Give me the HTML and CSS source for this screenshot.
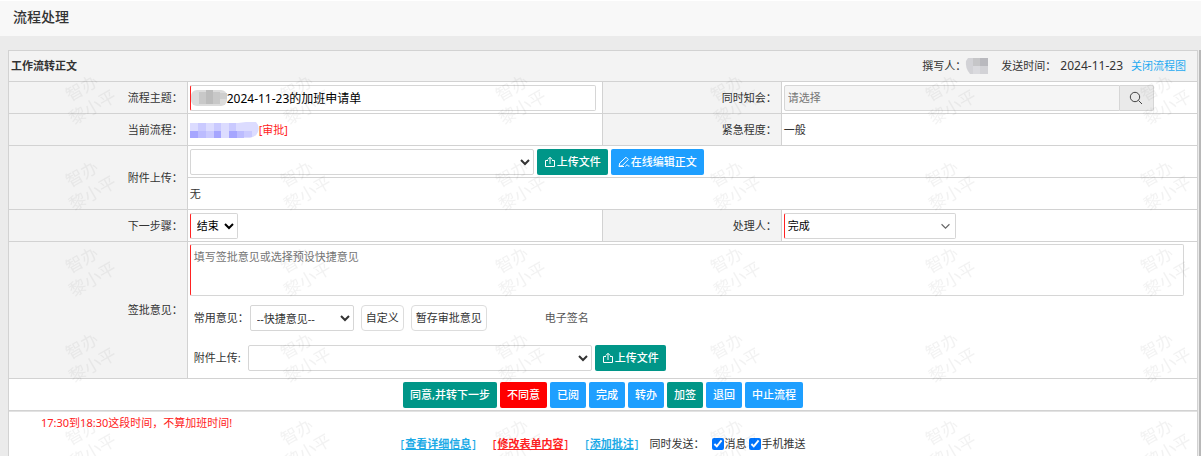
FILE: index.html
```html
<!DOCTYPE html>
<html lang="zh-CN">
<head>
<meta charset="utf-8">
<title>流程处理</title>
<link rel="stylesheet" href="styles.css">
</head>
<body>
<svg class="sprite" aria-hidden="true">
  <symbol id="upload" viewBox="0 0 12 12"><path d="M4 4.500H1.500v6h9v-6H8M6 8V1.500M3.800 3.500 6 1.300l2.200 2.200" fill="none" stroke="currentColor"/></symbol>
  <symbol id="pen" viewBox="0 0 12 12"><path d="M1 10.500 1.800 7 8 1.200l2.300 2.300L4.200 9.600 1 10.500h5M7.500 10.500c1-2 2-2 2.500-1s1 1 1.500.5" fill="none" stroke="currentColor"/></symbol>
</svg>
<header class="page-head"><h1>流程处理</h1></header>
<main class="page-body">
  <form class="panel">
    <div class="panel-head">
      <h2>工作流转正文</h2>
      <div class="meta">
        <span>撰写人：</span>
        <svg class="mosaic-author" viewBox="0 0 24 16" aria-hidden="true">
          <path d="M3 0h20v16H5Q0 10 1 3z" fill="#d2d2d6"/><path d="M8 0h7v8H8z" fill="#c6c6c8"/><path d="M15 0h8v8h-8z" fill="#b9b9be"/><path d="M8 8h7v8H8z" fill="#dadade"/>
        </svg>
        <span class="sent">发送时间：</span>
        <time class="num">2024-11-23</time>
        <a class="link-blue" href="#">关闭流程图</a>
      </div>
    </div>
    <table class="grid">
      <colgroup><col class="c-label"><col class="c-value"><col class="c-label"><col class="c-value"></colgroup>
      <tr>
        <th scope="row"><label for="subject">流程主题：</label></th>
        <td>
          <div class="subject">
            <input id="subject" class="box required" type="text" value="2024-11-23的加班申请单">
            <svg class="mosaic-subject" viewBox="0 0 36 16" aria-hidden="true">
              <rect width="36" height="16" rx="6" fill="#dcdcdc"/><path d="M8 2h7v12H8zM22 2h7v12h-7z" fill="#c8c8c8"/><path d="M15 0h7v14h-7z" fill="#bcbcbc"/><path d="M29 3h7v6h-7z" fill="#cecece"/>
            </svg>
          </div>
        </td>
        <th scope="row"><label for="notify">同时知会：</label></th>
        <td>
          <div class="picker">
            <input id="notify" class="box" type="text" placeholder="请选择">
            <button type="button" aria-label="搜索"><svg viewBox="0 0 14 14" aria-hidden="true"><circle cx="6" cy="6" r="4.700" fill="none" stroke="currentColor"/><path d="m9.500 9.500 3.500 3.500" stroke="currentColor"/></svg></button>
          </div>
        </td>
      </tr>
      <tr>
        <th scope="row">当前流程：</th>
        <td>
          <div class="line">
            <svg class="mosaic-flow" viewBox="0 0 69 16" aria-hidden="true">
              <path d="M0 1h48l8-1h10q4 4 2 10-2 5-8 6H0z" fill="#dcdcff"/><path d="M8 1h8v8H8zM24 1h7v8h-7zM39 1h7v8h-7zM16 9h8v7h-8zM54 9h8v6h-8z" fill="#cacaff"/><path d="M0 9h8v7H0zM24 9h7v7h-7zM39 9h8v7h-8z" fill="#a6a6ff"/><path d="M8 9h8v7H8zM47 9h7v7h-7z" fill="#bcbcff"/>
            </svg><span class="red">[审批]</span>
          </div>
        </td>
        <th scope="row">紧急程度：</th>
        <td>一般</td>
      </tr>
      <tr>
        <th scope="row" rowspan="2"><label for="file1">附件上传：</label></th>
        <td colspan="3">
          <div class="line gap">
            <select id="file1" class="box wide"><option></option></select>
            <button type="button" class="btn green"><svg><use href="#upload"/></svg>上传文件</button>
            <button type="button" class="btn blue"><svg><use href="#pen"/></svg>在线编辑正文</button>
          </div>
        </td>
      </tr>
      <tr><td colspan="3">无</td></tr>
      <tr>
        <th scope="row"><label for="next">下一步骤：</label></th>
        <td><div class="line"><select id="next" class="box required padded"><option>结束</option></select></div></td>
        <th scope="row"><label for="handler">处理人：</label></th>
        <td>
          <div class="handler">
            <select id="handler" class="box required"><option>完成</option></select>
            <svg viewBox="0 0 8 6" aria-hidden="true"><path d="m.5 1 3.500 3.500L7.500 1" fill="none" stroke="#666"/></svg>
          </div>
        </td>
      </tr>
      <tr>
        <th scope="row"><label for="opinion">签批意见：</label></th>
        <td colspan="3">
          <textarea id="opinion" class="box required" placeholder="填写签批意见或选择预设快捷意见"></textarea>
          <div class="line sub">
            <label for="quick">常用意见：</label>
            <select id="quick" class="box quick padded"><option>--快捷意见--</option></select>
            <button type="button" class="btn plain">自定义</button>
            <button type="button" class="btn plain">暂存审批意见</button>
            <span class="sign">电子签名</span>
          </div>
          <div class="line sub last">
            <label for="file2">附件上传:</label>
            <span class="line gap">
              <select id="file2" class="box wide"><option></option></select>
              <button type="button" class="btn green"><svg><use href="#upload"/></svg>上传文件</button>
            </span>
          </div>
        </td>
      </tr>
      <tr>
        <td colspan="4">
          <div class="line actions">
            <button type="button" class="btn green">同意,并转下一步</button>
            <button type="button" class="btn danger">不同意</button>
            <button type="button" class="btn blue">已阅</button>
            <button type="button" class="btn blue">完成</button>
            <button type="button" class="btn blue">转办</button>
            <button type="button" class="btn green">加签</button>
            <button type="button" class="btn blue">退回</button>
            <button type="button" class="btn blue">中止流程</button>
          </div>
        </td>
      </tr>
    </table>
    <div class="panel-foot">
      <p class="note red">17:30到18:30这段时间，不算加班时间!</p>
      <div class="line links">
        <span class="cyan">[<a href="#">查看详细信息</a>]</span>
        <span class="red">[<a href="#">修改表单内容</a>]</span>
        <span class="cyan">[<a href="#">添加批注</a>]</span>
        <div class="line checks">
          <span>同时发送：</span>
          <label><input type="checkbox" checked>消息</label>
          <label><input type="checkbox" checked>手机推送</label>
        </div>
      </div>
    </div>
  </form>
</main>
<svg class="watermark" aria-hidden="true">
  <defs>
    <pattern id="mark" width="215" height="86" patternUnits="userSpaceOnUse">
      <g transform="rotate(-30 82 20)"><text x="69" y="19">智办</text><text x="60" y="41">黎小平</text></g>
    </pattern>
  </defs>
  <rect width="100%" height="100%" fill="url(#mark)"/>
</svg>
</body>
</html>
```
FILE: styles.css
```css
* { box-sizing: border-box; }
body {
  margin: 0;
  min-height: 100vh;
  display: flex;
  flex-direction: column;
  position: relative;
  overflow: hidden;
  background: #ebebeb;
  color: #333;
  font: 11px/16px "Noto Sans", "Noto Sans CJK SC", sans-serif;
}
button, input, select, textarea { font: inherit; color: inherit; margin: 0; }
.sprite { position: absolute; width: 0; height: 0; }
.page-head { padding: 6px 13px 10px; background: #f8f8f8; border-top: 1px solid #fff; }
.page-head h1 { margin: 0; font-size: 14px; line-height: 19px; font-weight: 500; }
.page-body { flex: 1; display: flex; margin-top: 14px; padding: 0 1px 0 8px; border-right: 2px solid #b8b8b8; }
.panel { flex: 1; display: flex; flex-direction: column; min-width: 0; background: #fff; border: 1px solid #d2d2d2; border-bottom: 0; }
.panel-head { display: flex; justify-content: space-between; align-items: center; height: 30px; padding: 0 11px 0 2px; background: #f3f3f3; }
.panel-head h2 { margin: 0; font-size: 11px; font-weight: 700; }
.meta { display: flex; align-items: center; }
.mosaic-author { width: 24px; height: 16px; margin-left: -1px; }
.sent { margin-left: 12px; }
.num { margin: 0 8px 0 4px; font-size: 12px; }
.link-blue { color: #1eaaf1; text-decoration: none; }

.grid { width: 100%; table-layout: fixed; border-collapse: collapse; }
.c-label { width: 15%; }
.c-value { width: 35%; }
.grid th, .grid td { height: 32px; padding: 2px; border: 1px solid #d2d2d2; }
.grid th { padding-right: 4px; background: #f3f3f3; font-weight: 400; text-align: right; }
.grid tr > :first-child:not([colspan="3"]) { border-left: 0; }
.grid tr > :last-child { border-right: 0; }
.line { display: flex; align-items: center; }
.gap { gap: 3px; }
.box { height: 26px; border: 1px solid #d6d6d6; border-radius: 2px; background: #fff; outline: 0; }
.required { border-left: 1px solid #f22; color: #000; }
.padded { padding: 0 2px; }
.subject { position: relative; margin-right: 4px; }
.subject .box { display: block; width: 100%; padding: 0 0 0 36px; font-size: 12px; }
.mosaic-subject { position: absolute; left: 1px; top: 5px; width: 36px; height: 16px; }
.picker { display: flex; width: 370px; max-width: 100%; }
.picker .box { flex: 1; min-width: 0; padding: 0 3px; background: #f5f5f5; border-radius: 2px 0 0 2px; }
.picker button { display: grid; place-items: center; width: 34px; padding: 0; border: 1px solid #d6d6d6; border-left: 0; border-radius: 0 2px 2px 0; background: #eaeaea; color: #444; }
.picker svg { width: 14px; height: 14px; }
::placeholder { color: #757575; opacity: 1; }
.mosaic-flow { width: 69px; height: 16px; }
.red { color: #f22; }
.wide { width: 344px; }
.btn { position: relative; z-index: 2; display: flex; align-items: center; gap: 1px; height: 26px; padding: 0 7px; border: 0; border-radius: 2px; color: #fff; font-weight: 500; white-space: nowrap; }
.btn svg { width: 12px; height: 12px; }
.green { background: #009688; }
.blue { background: #1e9fff; }
.danger { background: #f00; }
.plain { padding: 0 4px; border: 1px solid #ddd; border-radius: 4px; background: #fff; color: #333; font-weight: 400; }
.handler { position: relative; width: 172px; }
.handler .box { display: block; width: 100%; padding: 0 3px; appearance: none; }
.handler svg { position: absolute; right: 6px; top: 10px; width: 9px; height: 7px; }
textarea.box { display: block; width: calc(100% - 11px); height: 52px; padding: 4px 3px; resize: none; }
.sub { margin-top: 9px; padding-left: 4px; gap: 7px; }
.sub label[for="quick"] { margin-right: -6px; }
.quick { width: 104px; }
.sign { margin-left: 51px; color: #555; }
.last { margin: 14px 0 5px; }
.actions { justify-content: center; gap: 3px; }
.panel-foot { flex: 1; border-top: 1px solid #e2e2e2; }
.note { margin: 0; padding: 3px 0 0 32px; line-height: 16px; }
.links { justify-content: center; gap: 17px; margin-top: 5px; }
.links > span { font-weight: 500; }
.links a { margin: 0 1px; color: inherit; font-weight: 700; }
.cyan { color: #1caae6; }
.checks { gap: 3px; margin-left: -6px; }
.checks span { margin-right: 5px; }
.checks label { display: flex; align-items: center; }
.checks input { width: 12px; height: 12px; }
.watermark { position: absolute; left: 0; top: 76px; width: 100%; height: calc(100% - 76px); z-index: 1; pointer-events: none; }
.watermark text { font: 17px "Noto Sans CJK SC", sans-serif; fill: #000; fill-opacity: .05; }
```
